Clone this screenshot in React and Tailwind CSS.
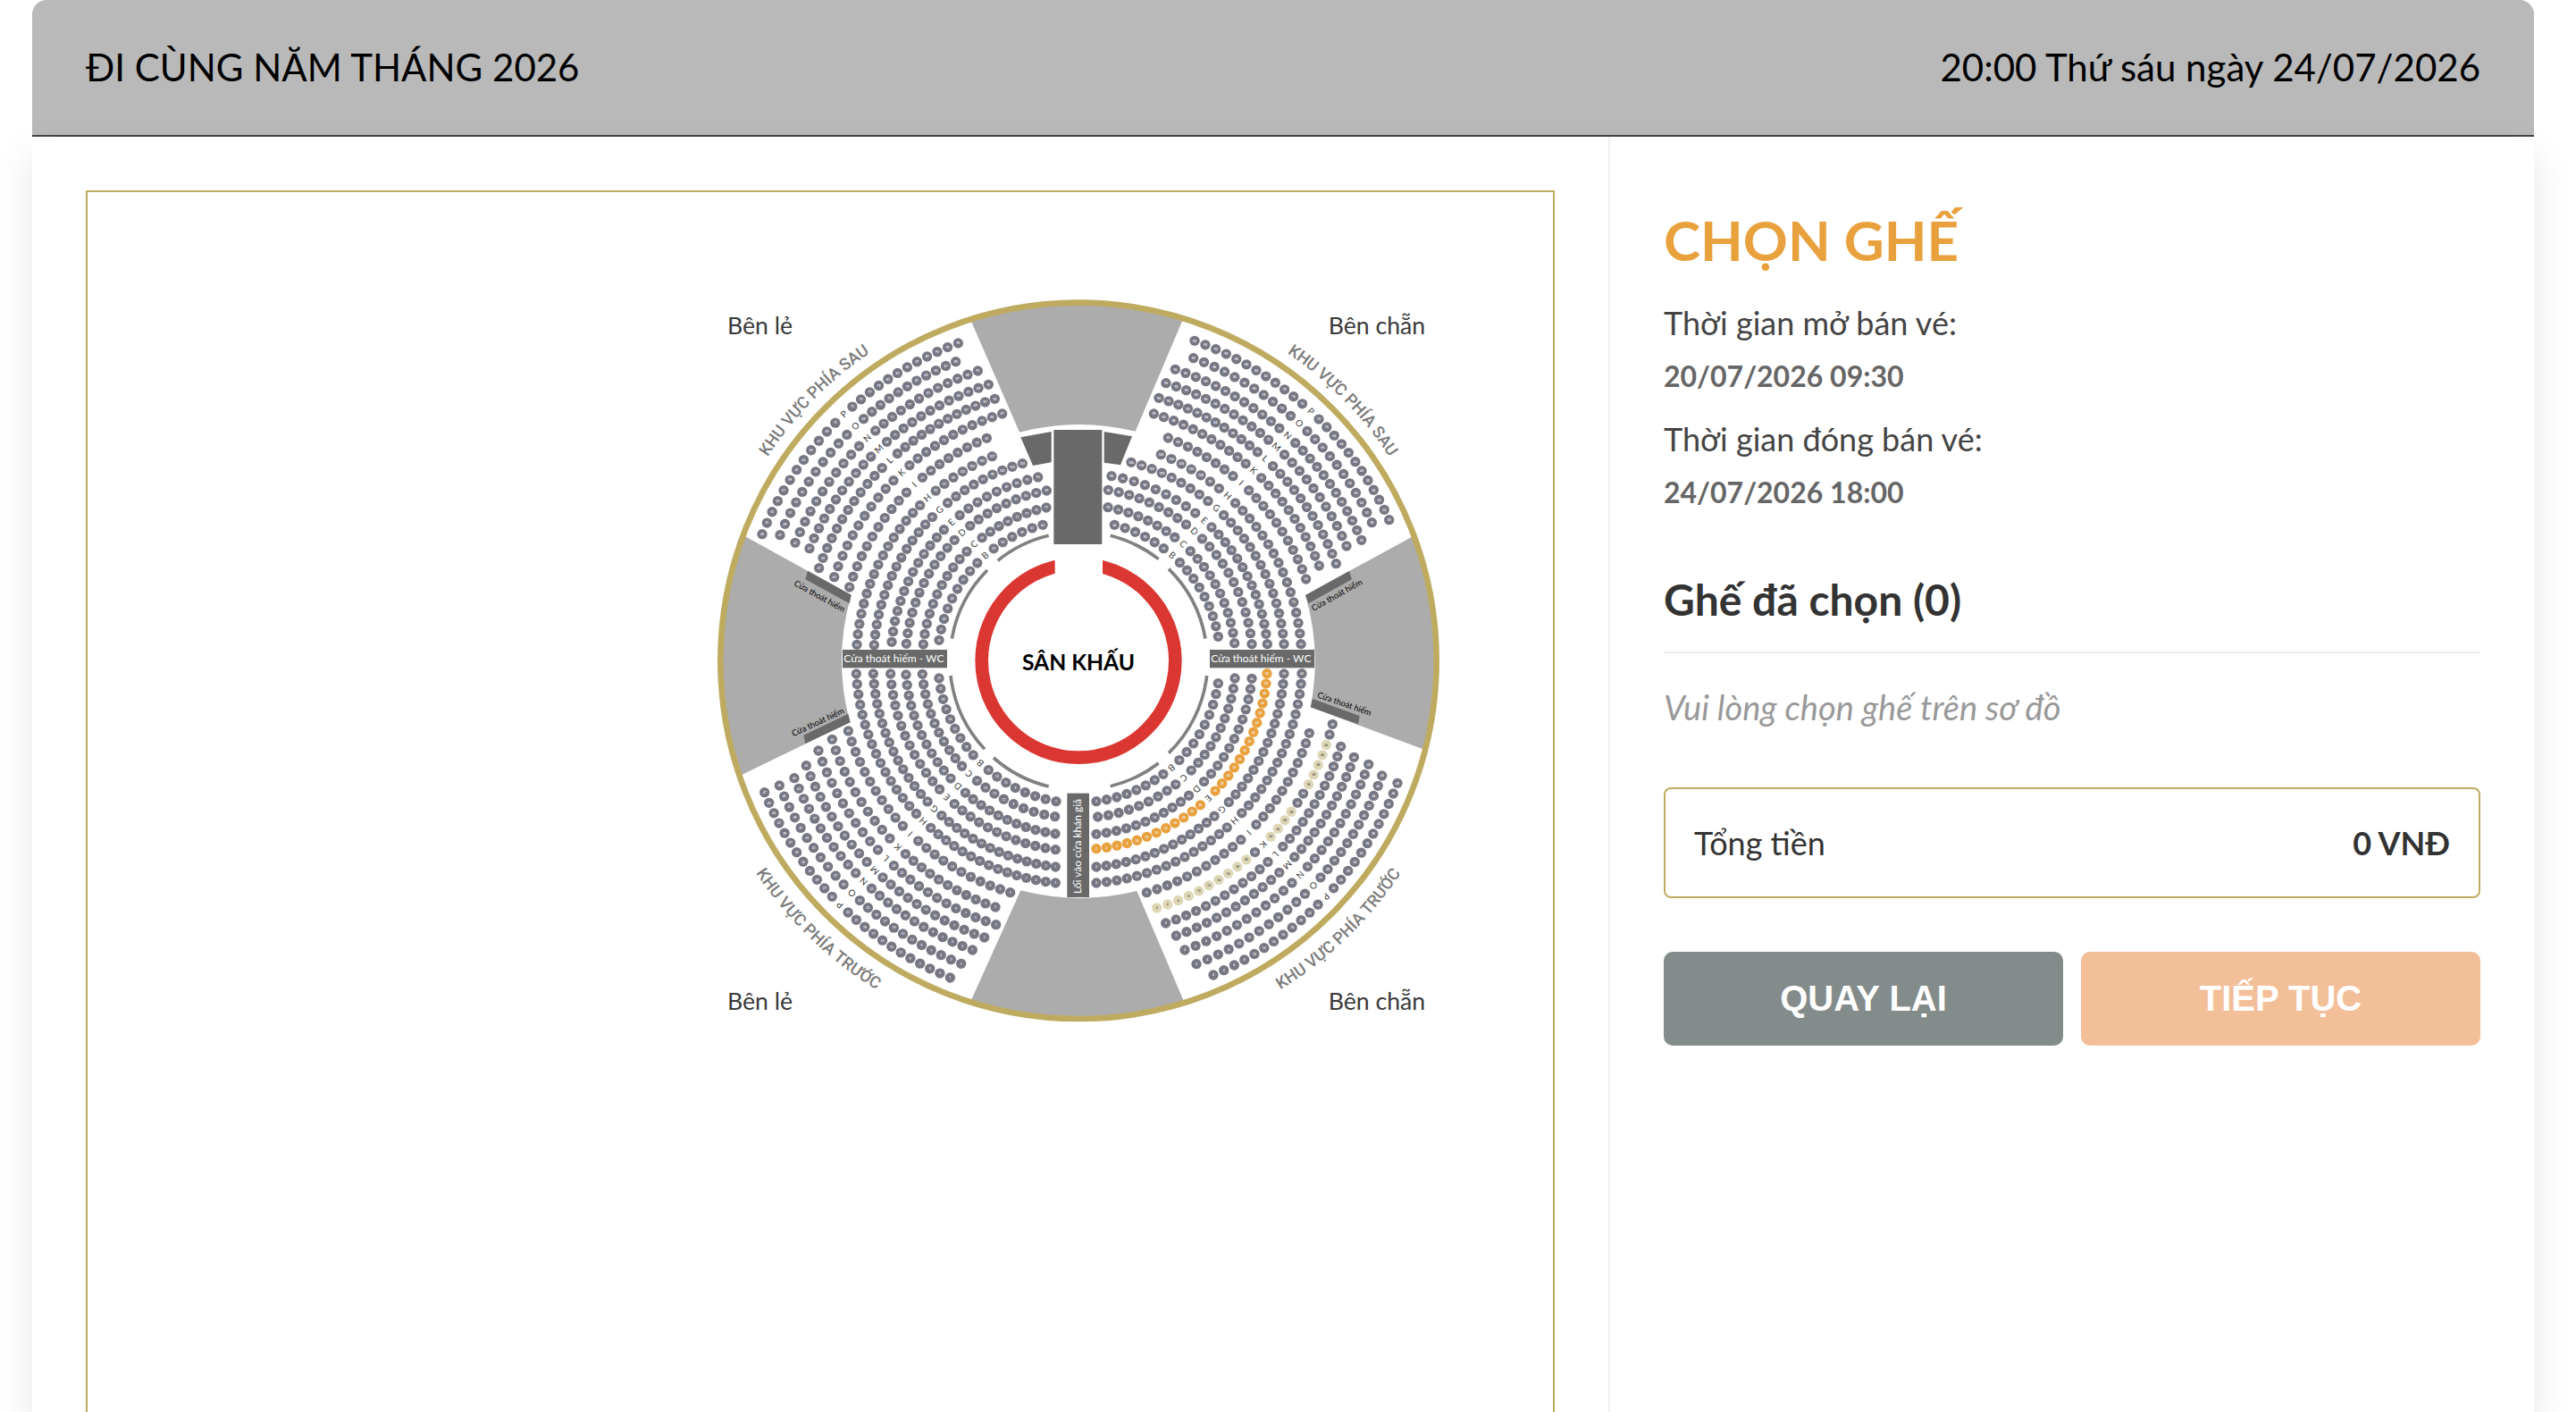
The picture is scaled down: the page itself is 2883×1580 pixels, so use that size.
// src/components/seats/SeatBooking.jsx
import { useMemo } from 'react';

const EVENT = {
  name: 'ĐI CÙNG NĂM THÁNG 2026',
  time: '20:00 Thứ sáu ngày 24/07/2026',
  saleOpen: '20/07/2026 09:30',
  saleClose: '24/07/2026 18:00',
};

// Center of the arena, in viewBox units
const CX = 1251;
const CY = 1258;

const SEAT_COLORS = {
  normal: '#777784',
  vip: '#e8a13c',
  held: '#ded7b6',
};

// row: [label, first seat x, y, seats before label, label x, y, seats after label, last seat x, y]
const FRONT_ODD = [
  ['B', 1176, 1730, 8, 923, 1600, 9, 783, 1317],
  ['C', 1172, 1781, 9, 882, 1638, 11, 727, 1303],
  ['D', 1173, 1839, 11, 844, 1681, 12, 672, 1305],
  ['E', 1174, 1892, 12, 810, 1715, 13, 620, 1302],
  ['G', 1174, 1950, 14, 769, 1754, 15, 562, 1302],
  ['H', 1174, 2004, 15, 728, 1799, 16, 505, 1302],
  ['I', 1022, 2036, 11, 685, 1841, 11, 478, 1494],
  ['K', 972, 2085, 11, 644, 1883, 11, 424, 1522],
  ['L', 974, 2144, 12, 605, 1921, 11, 378, 1560],
  ['M', 935, 2187, 12, 567, 1961, 11, 337, 1610],
  ['N', 895, 2229, 12, 529, 1999, 11, 297, 1652],
  ['O', 857, 2275, 12, 489, 2039, 11, 247, 1677],
  ['P', 820, 2322, 12, 448, 2080, 12, 197, 1700],
];

const BACK_ODD = [
  ['B', 783, 1189, 9, 940, 907, 6, 1131, 802],
  ['C', 730, 1203, 11, 901, 867, 8, 1143, 744],
  ['D', 673, 1201, 12, 861, 829, 9, 1144, 687],
  ['E', 624, 1195, 13, 825, 794, 9, 1115, 642],
  ['G', 565, 1205, 15, 785, 752, 9, 1063, 596],
  ['H', 507, 1204, 16, 745, 713, 7, 961, 572],
  ['I', 482, 1011, 11, 702, 669, 8, 943, 511],
  ['K', 431, 977, 11, 659, 628, 11, 995, 429],
  ['L', 380, 947, 12, 620, 588, 12, 970, 379],
  ['M', 348, 881, 11, 583, 549, 12, 949, 331],
  ['N', 300, 862, 11, 543, 511, 12, 913, 285],
  ['O', 249, 836, 11, 502, 470, 11, 839, 254],
  ['P', 189, 833, 12, 462, 429, 12, 847, 192],
];

const FRONT_EVEN = [
  ['B', 1311, 1730, 8, 1563, 1617, 9, 1720, 1334],
  ['C', 1316, 1782, 9, 1606, 1652, 11, 1776, 1317],
  ['D', 1311, 1840, 11, 1648, 1689, 12, 1833, 1318],
  ['E', 1311, 1889, 12, 1687, 1720, 14, 1884, 1301],
  ['G', 1311, 1950, 14, 1732, 1757, 15, 1941, 1302],
  ['H', 1311, 2004, 15, 1777, 1796, 16, 2001, 1301],
  ['I', 1480, 2036, 11, 1823, 1834, 11, 2026, 1501],
  ['K', 1514, 2088, 11, 1869, 1872, 13, 2104, 1471],
  ['L', 1544, 2139, 12, 1913, 1908, 12, 2132, 1546],
  ['M', 1579, 2181, 12, 1952, 1943, 12, 2176, 1582],
  ['N', 1608, 2229, 12, 1996, 1977, 12, 2225, 1606],
  ['O', 1647, 2276, 12, 2041, 2014, 12, 2270, 1644],
  ['P', 1704, 2313, 12, 2083, 2050, 12, 2322, 1669],
];

const BACK_EVEN = [
  ['B', 1720, 1177, 9, 1565, 905, 6, 1372, 802],
  ['C', 1775, 1199, 11, 1602, 866, 8, 1350, 743],
  ['D', 1833, 1202, 12, 1639, 825, 9, 1351, 685],
  ['E', 1885, 1202, 14, 1673, 787, 9, 1362, 638],
  ['G', 1941, 1202, 15, 1714, 745, 9, 1428, 592],
  ['H', 1998, 1202, 16, 1753, 703, 7, 1528, 566],
  ['I', 2015, 984, 11, 1797, 662, 8, 1552, 510],
  ['K', 2059, 939, 11, 1839, 620, 11, 1504, 429],
  ['L', 2116, 932, 12, 1878, 580, 12, 1521, 376],
  ['M', 2151, 873, 11, 1915, 541, 12, 1545, 326],
  ['N', 2201, 853, 12, 1953, 502, 12, 1576, 280],
  ['O', 2236, 794, 11, 1992, 461, 11, 1637, 242],
  ['P', 2294, 785, 12, 2032, 420, 12, 1641, 184],
];

const HELD_K = [
  2, 4, 6, 8, 10, 12, 14, 16, 18, 20, 24, 26, 28, 30, 36, 38, 40, 42, 44,
];

const toPolar = (x, y) => ({
  r: Math.hypot(x - CX, y - CY),
  a: Math.atan2(y - CY, x - CX),
});

const toPoint = (r, a) => ({ x: CX + r * Math.cos(a), y: CY + r * Math.sin(a) });

// Spreads the seats of one row along its arc, leaving a slot for the row letter
const layoutRow = (row, firstNumber) => {
  const [label, x0, y0, before, lx, ly, after, x1, y1] = row;
  const start = toPolar(x0, y0);
  const mid = toPolar(lx, ly);
  const end = toPolar(x1, y1);
  const total = before + after;
  const seats = [];

  for (let i = 0; i <= total; i++) {
    if (i === before) continue;
    const a =
      i < before
        ? start.a + ((mid.a - start.a) * i) / before
        : mid.a + ((end.a - mid.a) * (i - before)) / after;
    const r = start.r + ((end.r - start.r) * i) / total;
    seats.push({
      ...toPoint(r, a),
      number: firstNumber + seats.length * 2,
    });
  }

  const r = start.r + ((end.r - start.r) * before) / total;
  return {
    label,
    seats,
    letter: { ...toPoint(r, mid.a), angle: (mid.a * 180) / Math.PI + 90 },
  };
};

const buildSide = (front, back, first) =>
  front.flatMap((row, i) => {
    const inFront = row[3] + row[6];
    return [layoutRow(row, first), layoutRow(back[i], first + inFront * 2)];
  });

const seatType = (label, number) => {
  if (label === 'E' && number % 2 === 0 && number <= 52) return 'vip';
  if (label === 'K' && HELD_K.includes(number)) return 'held';
  return 'normal';
};

const SeatRow = ({ row }) => (
  <g>
    {row.seats.map((s) => {
      const type = seatType(row.label, s.number);
      return (
        <g key={s.number}>
          <circle cx={s.x} cy={s.y} r="17" fill={SEAT_COLORS[type]} />
          <text
            x={s.x}
            y={s.y + 4}
            textAnchor="middle"
            fontSize="10"
            fontWeight="700"
            fill={type === 'held' ? '#55554d' : '#f2f2f5'}
          >
            {s.number}
          </text>
        </g>
      );
    })}
    <text
      transform={`translate(${row.letter.x} ${row.letter.y}) rotate(${row.letter.angle})`}
      y="10"
      textAnchor="middle"
      fontSize="30"
      fill="#3a3a3a"
    >
      {row.label}
    </text>
  </g>
);

const SeatMap = () => {
  const rows = useMemo(
    () => [
      ...buildSide(FRONT_ODD, BACK_ODD, 1),
      ...buildSide(FRONT_EVEN, BACK_EVEN, 2),
    ],
    []
  );

  return (
    <svg
      viewBox="-2076 -315 4920 4095"
      className="block w-full"
      role="img"
      aria-label="Sơ đồ ghế"
    >
      <defs>
        <path id="arc-back-odd" d="M 3 1258 A 1248 1248 0 0 1 1251 10" />
        <path id="arc-back-even" d="M 1251 10 A 1248 1248 0 0 1 2499 1258" />
        <path id="arc-front-odd" d="M -45 1258 A 1296 1296 0 0 0 1251 2554" />
        <path id="arc-front-even" d="M 1251 2554 A 1296 1296 0 0 0 2547 1258" />
      </defs>

      {/* Khu vực không có ghế */}
      <g fill="#acacac">
        <path d="M 888 112 L 1053 491 A 792 792 0 0 1 1442 488 L 1602 112 A 1202 1202 0 0 0 888 112 Z" />
        <path d="M 127 838 L 488 1037 A 792 792 0 0 0 484 1465 L 114 1644 A 1202 1202 0 0 1 127 838 Z" />
        <path d="M 2376 839 L 2013 1038 A 792 792 0 0 1 2030 1414 L 2414 1557 A 1202 1202 0 0 0 2376 839 Z" />
        <path d="M 888 2404 L 1057 2029 A 792 792 0 0 0 1447 2031 L 1606 2404 A 1202 1202 0 0 1 888 2404 Z" />
      </g>
      <circle
        cx={CX}
        cy={CY}
        r="1202"
        fill="none"
        stroke="#bfab60"
        strokeWidth="20"
      />

      {/* Lối đi và cửa */}
      <g fill="#696969">
        <path d="M 1168 483 H 1330 V 867 H 1168 Z" />
        <path d="M 1057 508 L 1160 489 V 592 L 1098 603 Z" />
        <path d="M 1337 489 L 1431 505 L 1392 601 L 1337 593 Z" />
        <path d="M 342 956 L 488 1037 L 482 1066 L 334 985 Z" />
        <path d="M 478 1436 L 485 1465 L 334 1536 L 328 1508 Z" />
        <path d="M 2160 957 L 2169 985 L 2023 1066 L 2013 1038 Z" />
        <path d="M 2037 1386 L 2195 1443 L 2190 1471 L 2030 1414 Z" />
        <rect x="459" y="1221" width="351" height="61" />
        <rect x="1692" y="1221" width="351" height="61" />
        <rect x="1213" y="1703" width="74" height="349" />
      </g>
      <g fill="none" stroke="#808280" strokeWidth="11">
        <path d="M 826 1184 A 431 431 0 0 1 945 954" />
        <path d="M 980 922 A 431 431 0 0 1 1151 838" />
        <path d="M 1358 838 A 433 433 0 0 1 1520 917" />
        <path d="M 1554 950 A 433 433 0 0 1 1677 1184" />
        <path d="M 822 1308 A 433 433 0 0 0 936 1555" />
        <path d="M 966 1584 A 433 433 0 0 0 1151 1680" />
        <path d="M 1682 1308 A 433 433 0 0 1 1554 1568" />
        <path d="M 1520 1602 A 433 433 0 0 1 1358 1679" />
      </g>

      {/* Sân khấu */}
      <circle
        cx={CX}
        cy={CY}
        r="325"
        fill="#fff"
        stroke="#db3732"
        strokeWidth="44"
      />
      <rect x="1172" y="890" width="160" height="100" fill="#fff" />
      <text
        x={CX}
        y="1290"
        textAnchor="middle"
        fontSize="74"
        fontWeight="700"
      >
        SÂN KHẤU
      </text>

      {rows.map((row, i) => (
        <SeatRow key={i} row={row} />
      ))}

      <g fill="#fff" fontSize="36" textAnchor="middle">
        <text x="631" y="1263">
          Cửa thoát hiểm - WC
        </text>
        <text x="1864" y="1263">
          Cửa thoát hiểm - WC
        </text>
        <text transform="translate(1261 1881) rotate(-90)">
          Lối vào cửa khán giả
        </text>
      </g>
      <g fontSize="28" textAnchor="middle">
        <text transform="translate(377 1050) rotate(29)">Cửa thoát hiểm</text>
        <text transform="translate(380 1473) rotate(-25)">Cửa thoát hiểm</text>
        <text transform="translate(2123 1046) rotate(-29)">Cửa thoát hiểm</text>
        <text transform="translate(2141 1412) rotate(19)">Cửa thoát hiểm</text>
      </g>

      <g
        className="font-['Roboto',sans-serif]"
        fill="#7b7b7b"
        fontSize="55"
        fontWeight="500"
        textAnchor="middle"
      >
        <text>
          <textPath href="#arc-back-odd" startOffset="49.5%">
            KHU VỰC PHÍA SAU
          </textPath>
        </text>
        <text>
          <textPath href="#arc-back-even" startOffset="50.5%">
            KHU VỰC PHÍA SAU
          </textPath>
        </text>
        <text>
          <textPath href="#arc-front-odd" startOffset="51%">
            KHU VỰC PHÍA TRƯỚC
          </textPath>
        </text>
        <text>
          <textPath href="#arc-front-even" startOffset="49%">
            KHU VỰC PHÍA TRƯỚC
          </textPath>
        </text>
      </g>

      <g fill="#3a3a3a" fontSize="80">
        <text x="72" y="162">
          Bên lẻ
        </text>
        <text x="2090" y="162">
          Bên chẵn
        </text>
        <text x="72" y="2430">
          Bên lẻ
        </text>
        <text x="2090" y="2430">
          Bên chẵn
        </text>
      </g>
    </svg>
  );
};

const SaleTime = ({ label, value }) => (
  <div className="text-[36px] leading-[60px]">
    <dt className="text-[#444444]">{label}</dt>
    <dd className="text-[32px] font-bold text-[#666666]">{value}</dd>
  </div>
);

export default function App() {
  return (
    <div className="h-screen overflow-hidden flex flex-col bg-white pl-9 pr-[47px] font-['Lato','Open_Sans',sans-serif]">
      <header className="flex items-center justify-between rounded-t-2xl border-b-2 border-[#444444] bg-[#b9b9b9] px-[60px] text-[42px] leading-[151px] text-black">
        <h1>{EVENT.name}</h1>
        <time dateTime="2026-07-24T20:00">{EVENT.time}</time>
      </header>

      <main className="grid flex-1 min-h-0 grid-cols-[63fr_37fr] bg-white shadow-[0_20px_40px_rgba(0,0,0,0.1)]">
        <section className="flex min-h-0 flex-col px-[60px] pt-[60px]">
          <div className="min-h-0 flex-1 overflow-hidden border-2 border-b-0 border-[#bfab60]">
            <SeatMap />
          </div>
        </section>

        <aside className="border-l-2 border-[#eeeeee] p-[60px]">
          <h2 className="mb-2 text-[62px] leading-[110px] font-bold text-[#e8a13c]">
            CHỌN GHẾ
          </h2>
          <dl className="flex flex-col gap-[10px]">
            <SaleTime label="Thời gian mở bán vé:" value={EVENT.saleOpen} />
            <SaleTime label="Thời gian đóng bán vé:" value={EVENT.saleClose} />
          </dl>

          <h3 className="mt-[60px] border-b-2 border-[#eeeeee] pb-7 text-[48px] leading-[60px] font-bold text-[#333333]">
            Ghế đã chọn (0)
          </h3>
          <p className="mt-[30px] text-[38px] leading-[60px] text-[#999999] italic">
            Vui lòng chọn ghế trên sơ đồ
          </p>

          <div className="mt-[60px] flex items-center justify-between rounded-lg border-2 border-[#bfab60] px-8 text-[36px] leading-[120px] text-[#333333]">
            <span>Tổng tiền</span>
            <strong>0 VNĐ</strong>
          </div>

          <div className="mt-[60px] grid grid-cols-2 gap-5 font-['Liberation_Sans',Arial,sans-serif] text-[40px] leading-[105px] font-bold text-white">
            <button type="button" className="rounded-[10px] bg-[#838b8b]">
              QUAY LẠI
            </button>
            <button type="button" className="rounded-[10px] bg-[#f3bf99]">
              TIẾP TỤC
            </button>
          </div>
        </aside>
      </main>
    </div>
  );
}
